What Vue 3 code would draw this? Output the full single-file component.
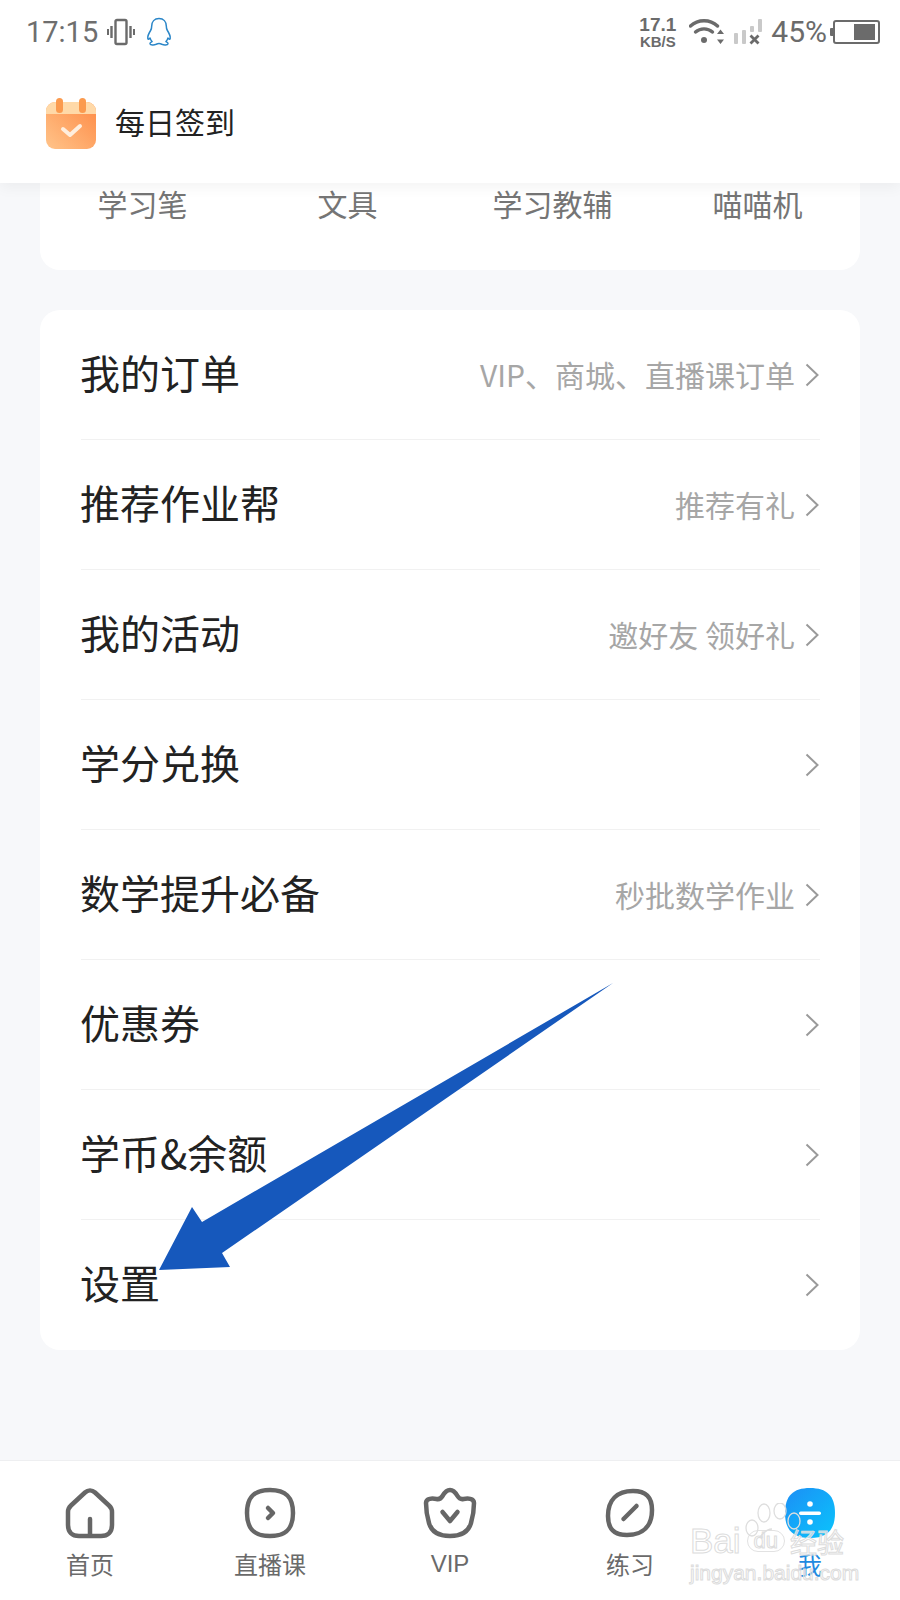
<script setup>
const tabs = ['学习笔', '文具', '学习教辅', '喵喵机']
const rows = [
  { title: '我的订单', hint: 'VIP、商城、直播课订单' },
  { title: '推荐作业帮', hint: '推荐有礼' },
  { title: '我的活动', hint: '邀好友 领好礼' },
  { title: '学分兑换', hint: '' },
  { title: '数学提升必备', hint: '秒批数学作业' },
  { title: '优惠券', hint: '' },
  { title: '学币&余额', hint: '' },
  { title: '设置', hint: '' }
]
</script>

<template>
  <div class="page">
    <header class="head">
      <div class="status">
        <div class="status-left">
          <span class="time">17:15</span>
          <svg class="vib" width="28" height="28" viewBox="0 0 28 28" fill="none" stroke="#6b6b6b">
            <rect x="8.500" y="2" width="11" height="24" rx="1.500" stroke-width="2.400" />
            <path d="M4.500 8v12M23.500 8v12" stroke-width="2.400" />
            <path d="M1 11v6M27 11v6" stroke-width="2" />
          </svg>
          <svg class="qq" width="26" height="30" viewBox="0 0 26 30" fill="none" stroke="#2a86c8" stroke-width="1.500" stroke-linejoin="round">
            <path d="M13 1.500c-4.600 0-7.300 3.300-7.300 7.600 0 1.800-.2 3-1.100 4.400C3 16 1.500 18.700 1.800 21.300c.2 1.200 1.100 1.200 2.300-.2.400 1.500 1 2.600 2 3.500-1.500.6-2.300 1.400-2 2.300.4 1.100 3.600 1.400 6 .4.900-.4 1.500-.7 2.900-.7s2 .3 2.900.7c2.400 1 5.600.7 6-.4.300-.9-.5-1.700-2-2.300 1-.9 1.600-2 2-3.500 1.200 1.400 2.100 1.400 2.300.2.300-2.600-1.200-5.300-2.800-7.800-.9-1.400-1.100-2.600-1.100-4.400 0-4.300-2.700-7.600-7.300-7.600z" />
          </svg>
        </div>
        <div class="status-right">
          <div class="speed"><span>17.1</span><span class="unit">KB/S</span></div>
          <svg class="wifi" width="36" height="28" viewBox="0 0 36 28" fill="none" stroke="#6b6b6b" stroke-linecap="round">
            <path d="M1.500 8C9 1 21 1 28.500 8" stroke-width="3.400" />
            <path d="M6.500 14c4.800-4.200 12.200-4.200 17 0" stroke-width="3.400" />
            <circle cx="15" cy="22" r="3" fill="#6b6b6b" stroke="none" />
            <path d="M31.500 11.500l3.500 4.500h-7zM31.500 26l-3.500-4.500h7z" fill="#6b6b6b" stroke="none" />
          </svg>
          <svg class="sig" width="28" height="28" viewBox="0 0 28 28">
            <rect x="0" y="15" width="4" height="11" rx="1" fill="#c9c9c9" />
            <rect x="8" y="12" width="4" height="14" rx="1" fill="#c9c9c9" />
            <rect x="16" y="8" width="4" height="6" rx="1" fill="#c9c9c9" />
            <rect x="24" y="1" width="4" height="13" rx="1" fill="#c9c9c9" />
            <path d="M16.500 17.500l8 8M24.500 17.500l-8 8" stroke="#6b6b6b" stroke-width="2.800" />
          </svg>
          <span class="pct">45%</span>
          <svg class="batt" width="50" height="28" viewBox="0 0 50 28" fill="none">
            <rect x="0" y="10" width="4" height="8" rx="1" fill="#6b6b6b" />
            <rect x="4" y="3" width="45" height="22" rx="2" stroke="#6b6b6b" stroke-width="2" />
            <rect x="24" y="6" width="21" height="16" fill="#6b6b6b" />
          </svg>
        </div>
      </div>
      <div class="signin">
        <svg width="50" height="52" viewBox="0 0 50 52">
          <defs>
            <linearGradient id="calBody" x1="0" y1="1" x2="1" y2="0">
              <stop offset="0" stop-color="#ffc48a" />
              <stop offset="1" stop-color="#fe8a45" />
            </linearGradient>
          </defs>
          <rect x="0" y="4" width="50" height="47" rx="9" fill="url(#calBody)" />
          <path d="M0 16v-3a9 9 0 0 1 9-9h32a9 9 0 0 1 9 9v3z" fill="#ffd9a8" />
          <rect x="10" y="0" width="7" height="15" rx="3.500" fill="#fb9a4e" />
          <rect x="33" y="0" width="7" height="15" rx="3.500" fill="#fb9a4e" />
          <path d="M17 31l7 6 10-9" fill="none" stroke="#ffeedd" stroke-width="4" stroke-linecap="round" stroke-linejoin="round" />
        </svg>
        <span class="signin-text">每日签到</span>
      </div>
    </header>

    <main class="content">
      <section class="card tabs">
        <span v-for="t in tabs" :key="t" class="tab">{{ t }}</span>
      </section>
      <section class="card list">
        <div v-for="r in rows" :key="r.title" class="row">
          <span class="row-title">{{ r.title }}</span>
          <span class="row-hint">{{ r.hint }}</span>
          <svg class="chev" width="14" height="24" viewBox="0 0 14 24" fill="none" stroke="#9a9a9a" stroke-width="2">
            <path d="M1.500 1.500L12.500 12 1.500 22.500" />
          </svg>
        </div>
      </section>
    </main>

    <nav class="nav">
      <div class="nav-item">
        <svg width="52" height="52" viewBox="0 0 52 52" fill="none" stroke="#666" stroke-width="4.500" stroke-linejoin="round" stroke-linecap="round">
          <path d="M21 5.500c3-2.800 7-2.800 10 0l14 13c2 1.900 3 3.600 3 6.500v13c0 7-4 11-11 11H15c-7 0-11-4-11-11V25c0-2.900 1-4.600 3-6.500z" />
          <path d="M26 32v16" />
        </svg>
        <span class="nav-label">首页</span>
      </div>
      <div class="nav-item">
        <svg width="52" height="52" viewBox="0 0 52 52" fill="none" stroke="#666" stroke-width="4.500" stroke-linejoin="round" stroke-linecap="round">
          <path d="M26 3c16 0 23 7 23 23s-7 23-23 23S3 42 3 26 10 3 26 3z" />
          <path d="M24 21l5 5-5 5" />
        </svg>
        <span class="nav-label">直播课</span>
      </div>
      <div class="nav-item">
        <svg width="54" height="52" viewBox="0 0 54 52" fill="none" stroke="#666" stroke-width="4.500" stroke-linejoin="round" stroke-linecap="round">
          <path d="M27 3c3.500 0 5.500 2.500 7.500 6 1.500 2.500 3 3.600 6 3 4-.8 10.500-1 10.500 4 0 6-1.200 14-3 20-2.200 8-9 13-21 13S8.200 44 6 36C4.200 30 3 22 3 16c0-5 6.500-4.800 10.500-4 3 .6 4.500-.5 6-3 2-3.500 4-6 7.500-6z" />
          <path d="M19.500 25l7.500 9 7.500-9" />
        </svg>
        <span class="nav-label latin">VIP</span>
      </div>
      <div class="nav-item">
        <svg width="52" height="52" viewBox="0 0 52 52" fill="none" stroke="#666" stroke-width="4.500" stroke-linejoin="round" stroke-linecap="round">
          <path d="M29 4c13 0 19 6 19 19 0 16-9 25-25 25C10 48 4 42 4 29 4 13 13 4 29 4z" />
          <path d="M19.500 32l13-13" />
        </svg>
        <span class="nav-label">练习</span>
      </div>
      <div class="nav-item">
        <svg width="52" height="52" viewBox="0 0 52 52">
          <defs>
            <linearGradient id="meBlue" x1="0" y1="0" x2="1" y2="1">
              <stop offset="0" stop-color="#1c8ff5" />
              <stop offset="1" stop-color="#0ac4fc" />
            </linearGradient>
          </defs>
          <path d="M26 1c17 0 25 8 25 25s-8 25-25 25S1 43 1 26 9 1 26 1z" fill="url(#meBlue)" />
          <circle cx="26" cy="17" r="2.800" fill="#fff" />
          <circle cx="26" cy="35" r="2.800" fill="#fff" />
          <rect x="15" y="24.500" width="22" height="3.500" rx="1.700" fill="#fff" />
        </svg>
        <span class="nav-label active">我</span>
      </div>
    </nav>

    <svg class="arrow" width="900" height="1600" viewBox="0 0 900 1600">
      <polygon points="613,983 202,1222 192,1207 159,1270 230,1267 222,1253" fill="#1658bc" />
    </svg>

    <div class="mark">
      <svg class="paw" width="74" height="54" viewBox="0 0 74 54" fill="none" stroke="#dedede" stroke-width="1.300">
        <ellipse cx="8" cy="25" rx="6" ry="8" />
        <ellipse cx="20" cy="10" rx="6" ry="9" />
        <ellipse cx="36" cy="8" rx="6" ry="8" />
        <ellipse cx="50" cy="18" rx="6" ry="8" />
        <path d="M28 26c-5 0-8 3-12 8" />
      </svg>
      <div class="mark-top">
        <span class="mark-bai">Bai</span>
        <span class="mark-du">du</span>
        <span class="mark-cn">经验</span>
      </div>
      <div class="mark-url">jingyan.baidu.com</div>
    </div>
  </div>
</template>

<style>
html, body { margin: 0; padding: 0; background: #fff; }
</style>

<style scoped>
.page {
  position: relative;
  width: 900px;
  height: 1600px;
  overflow: hidden;
  display: flex;
  flex-direction: column;
  background: #f7f8fa;
  font-family: "Noto Sans CJK SC", "Liberation Sans", sans-serif;
}
.head {
  position: relative;
  z-index: 2;
  height: 183px;
  flex: none;
  background: #fff;
  box-shadow: 0 4px 14px rgba(0, 0, 0, 0.05);
}
.status {
  height: 64px;
  display: flex;
  justify-content: space-between;
  align-items: center;
  padding: 0 20px 0 26px;
  color: #6b6b6b;
}
.status-left, .status-right { display: flex; align-items: center; }
.time { font: 29px/1 Roboto, sans-serif; color: #6e6e6e; }
.vib { margin-left: 9px; margin-right: 11px; }
.speed {
  display: flex;
  flex-direction: column;
  align-items: center;
  font: bold 19px/18px "Liberation Sans", sans-serif;
  color: #6b6b6b;
  margin-right: 13px;
}
.unit { font-size: 15px; line-height: 15px; }
.wifi { margin-right: 9px; }
.sig { margin-right: 9px; }
.pct { font: 30px/1 Roboto, sans-serif; }
.batt { margin-left: 3px; }
.signin {
  height: 119px;
  padding-left: 46px;
  display: flex;
  align-items: center;
  gap: 19px;
  box-sizing: border-box;
}
.signin-text { font-size: 30px; line-height: 1; color: #222; margin-bottom: 6px; }
.content {
  flex: 1;
  padding: 0 40px;
  display: flex;
  flex-direction: column;
  gap: 40px;
}
.card { background: #fff; border-radius: 20px; }
.tabs {
  height: 87px;
  border-radius: 0 0 20px 20px;
  display: grid;
  grid-template-columns: repeat(4, 205px);
}
.tab {
  font-size: 30px;
  line-height: 40px;
  color: #757575;
  text-align: center;
}
.list { padding: 0 40px 0 41px; }
.row {
  height: 130px;
  box-sizing: border-box;
  display: flex;
  align-items: center;
  border-bottom: 1px solid #f1f1f1;
}
.row:last-child { border-bottom: none; }
.row-title {
  flex: 1;
  font-size: 40px;
  color: #222;
  line-height: 1;
  margin-bottom: 6px;
  margin-left: -1px;
}
.row-hint {
  font-size: 30px;
  line-height: 1;
  color: #a6a6a6;
  margin-right: 10px;
  margin-bottom: 2px;
}
.chev { flex: none; margin-right: 1px; }
.nav {
  height: 140px;
  flex: none;
  box-sizing: border-box;
  background: #fff;
  border-top: 1px solid #eeeff1;
  display: grid;
  grid-template-columns: repeat(5, 1fr);
}
.nav-item {
  display: flex;
  flex-direction: column;
  align-items: center;
  padding-top: 26px;
  gap: 10px;
}
.nav-label { font-size: 24px; line-height: 30px; color: #6a6a6a; }
.nav-label.latin { font-family: "Liberation Sans", sans-serif; }
.nav-label.active { color: #1f8ae0; }
.arrow {
  position: absolute;
  left: 0;
  top: 0;
  z-index: 3;
  pointer-events: none;
}
.mark {
  position: absolute;
  z-index: 4;
  left: 690px;
  top: 1503px;
  width: 170px;
  font-family: "Liberation Sans", sans-serif;
}
.paw { position: absolute; left: 54px; top: 0; }
.mark-top {
  display: flex;
  align-items: center;
  height: 28px;
  margin-top: 24px;
  white-space: nowrap;
}
.mark-bai {
  font-size: 35px;
  color: transparent;
  -webkit-text-stroke: 1px #dcdcdc;
}
.mark-du {
  font-size: 22px;
  margin-left: 6px;
  padding: 0 6px;
  border: 1px solid #e2e2e2;
  border-radius: 14px;
  line-height: 20px;
  color: transparent;
  -webkit-text-stroke: 1px #dcdcdc;
}
.mark-cn {
  font-family: "Noto Sans CJK SC", sans-serif;
  font-size: 27px;
  margin-left: 5px;
  color: rgba(255, 255, 255, 0.6);
  -webkit-text-stroke: 1px #dcdcdc;
}
.mark-url {
  font-size: 21px;
  line-height: 24px;
  margin-top: 6px;
  white-space: nowrap;
  color: rgba(255, 255, 255, 0.4);
  -webkit-text-stroke: 1px #dcdcdc;
}
</style>
